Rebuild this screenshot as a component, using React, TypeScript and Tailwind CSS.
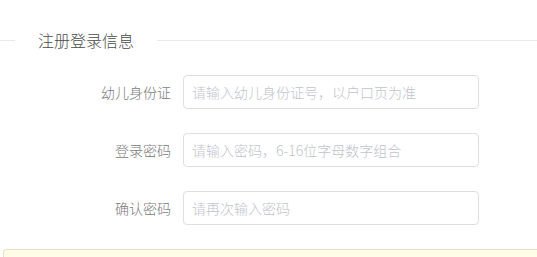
import React from "react";

const rows = [
  { label: "幼儿身份证", placeholder: "请输入幼儿身份证号，以户口页为准", type: "text" },
  { label: "登录密码", placeholder: "请输入密码，6-16位字母数字组合", type: "password" },
  { label: "确认密码", placeholder: "请再次输入密码", type: "password" },
];

export default function App() {
  return (
    <div
      className="w-[537px] h-[257px] overflow-hidden bg-white font-light"
      style={{ fontFamily: '"Noto Sans CJK SC", "Noto Sans", sans-serif' }}
    >
      <div className="pt-[30px] flex items-center h-[50px] box-border">
        <div className="w-[15px] h-px bg-[#e8e8ee]" />
        <span className="px-[23px] text-[16px] leading-[20px] text-[#4a4a4a]">注册登录信息</span>
        <div className="flex-1 h-px bg-[#e8e8ee]" />
      </div>
      <div className="mt-[25px] flex flex-col gap-[24px]">
        {rows.map((r) => (
          <div key={r.label} className="flex items-center h-[34px]">
            <label className="w-[171px] text-right text-[14px] text-[#7a7a7a]">{r.label}</label>
            <input
              type={r.type}
              placeholder={r.placeholder}
              className="ml-[12px] w-[296px] h-[34px] box-border border border-[#dcdfe6] rounded-[4px] px-[8px] text-[14px] font-light text-[#606266] placeholder:text-[#c0c4cc] outline-none"
            />
          </div>
        ))}
      </div>
      <div className="mt-[24px] ml-[3px] h-[20px] border-t border-l border-[#f0dcc0] bg-[#fffde8] rounded-tl-[4px]" />
    </div>
  );
}
